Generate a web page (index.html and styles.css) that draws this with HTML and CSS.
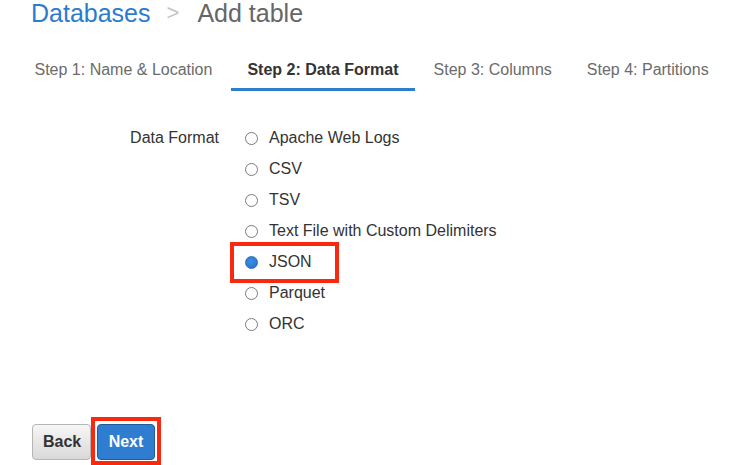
FILE: index.html
```html
<!DOCTYPE html>
<html lang="en">
<head>
<meta charset="utf-8">
<title>Add table</title>
<link rel="stylesheet" href="styles.css">
</head>
<body>
<div class="page">
  <h1 class="title"><span class="crumb-link">Databases</span><span class="sep">&gt;</span><span class="current">Add table</span></h1>

  <nav class="tabs">
    <div class="tab">Step 1: Name &amp; Location</div>
    <div class="tab active">Step 2: Data Format</div>
    <div class="tab">Step 3: Columns</div>
    <div class="tab">Step 4: Partitions</div>
  </nav>

  <div class="form">
    <div class="label">Data Format</div>
    <div class="options">
      <div class="option"><span class="radio"></span><span>Apache Web Logs</span></div>
      <div class="option"><span class="radio"></span><span>CSV</span></div>
      <div class="option"><span class="radio"></span><span>TSV</span></div>
      <div class="option"><span class="radio"></span><span>Text File with Custom Delimiters</span></div>
      <div class="option selected"><span class="radio checked"></span><span>JSON</span><span class="mark mark-json"></span></div>
      <div class="option"><span class="radio"></span><span>Parquet</span></div>
      <div class="option"><span class="radio"></span><span>ORC</span></div>
    </div>
  </div>

  <div class="footer">
    <button class="btn btn-back">Back</button>
    <div class="next-wrap">
      <button class="btn btn-next">Next</button>
      <span class="mark mark-next"></span>
    </div>
  </div>
</div>
</body>
</html>
```

FILE: styles.css
```css
html, body {
  margin: 0;
  padding: 0;
  background: #ffffff;
}

body {
  font-family: "Liberation Sans", Arial, Helvetica, sans-serif;
  color: #333333;
}

.page {
  width: 740px;
  height: 465px;
  overflow: hidden;
}

.title {
  margin: 0;
  padding-top: 1px;
  padding-left: 31px;
  font-size: 25px;
  line-height: 23px;
  font-weight: normal;
  white-space: nowrap;
}

.crumb-link {
  color: #2b7bcf;
}

.sep {
  color: #c4c4c4;
  font-size: 22px;
  margin: 0 18px 0 16px;
  vertical-align: 2px;
}

.current {
  color: #666666;
}

.tabs {
  display: flex;
  margin-top: 26px;
  padding-left: 18px;
}

.tab {
  padding: 10px 16.5px 9px;
  margin-right: 2px;
  border-bottom: 3px solid transparent;
  font-size: 16px;
  line-height: 18px;
  color: #6b6b6b;
  white-space: nowrap;
}

.tab.active {
  font-weight: bold;
  color: #333333;
  border-bottom-color: #2f7dcd;
}

.form {
  display: grid;
  grid-template-columns: 219px auto;
  column-gap: 26px;
  margin-top: 31px;
}

.label {
  text-align: right;
  font-size: 16px;
  line-height: 31px;
  color: #333333;
}

.options {
  display: flex;
  flex-direction: column;
}

.option {
  position: relative;
  display: flex;
  align-items: center;
  height: 31px;
  font-size: 16px;
  color: #333333;
  white-space: nowrap;
}

.radio {
  box-sizing: border-box;
  width: 13px;
  height: 13px;
  margin-right: 11px;
  margin-top: 2px;
  border: 1px solid #7a7a7a;
  border-radius: 50%;
  background: #ffffff;
  flex: none;
}

.radio.checked {
  border-color: #2a6fc0;
  background: radial-gradient(circle at 45% 40%, #3d8fe0 0%, #2f7fd6 55%, #2a74c8 75%, #bcd6f2 90%);
}

.mark {
  position: absolute;
  box-sizing: border-box;
  border: 4px solid #f9280f;
  pointer-events: none;
}

.mark-json {
  left: -15px;
  top: -4px;
  width: 109px;
  height: 41px;
}

.footer {
  display: flex;
  align-items: flex-start;
  gap: 6px;
  margin-top: 85px;
  padding-left: 32px;
}

.next-wrap {
  position: relative;
  margin-top: -0.5px;
}

.btn {
  box-sizing: border-box;
  height: 36px;
  padding: 0 10px;
  border-radius: 4px;
  font-family: "Liberation Sans", Arial, Helvetica, sans-serif;
  font-size: 16px;
  font-weight: bold;
  line-height: 34px;
  cursor: pointer;
}

.btn-back {
  width: 59px;
  color: #333333;
  background: linear-gradient(#f6f6f6, #d9d9d9);
  border: 1px solid #b5b5b5;
}

.btn-next {
  width: 58px;
  color: #ffffff;
  background: #2e7dd1;
  border: 1px solid #1e5c9c;
}

.mark-next {
  left: -6px;
  top: -7px;
  width: 70px;
  height: 48px;
}
```
